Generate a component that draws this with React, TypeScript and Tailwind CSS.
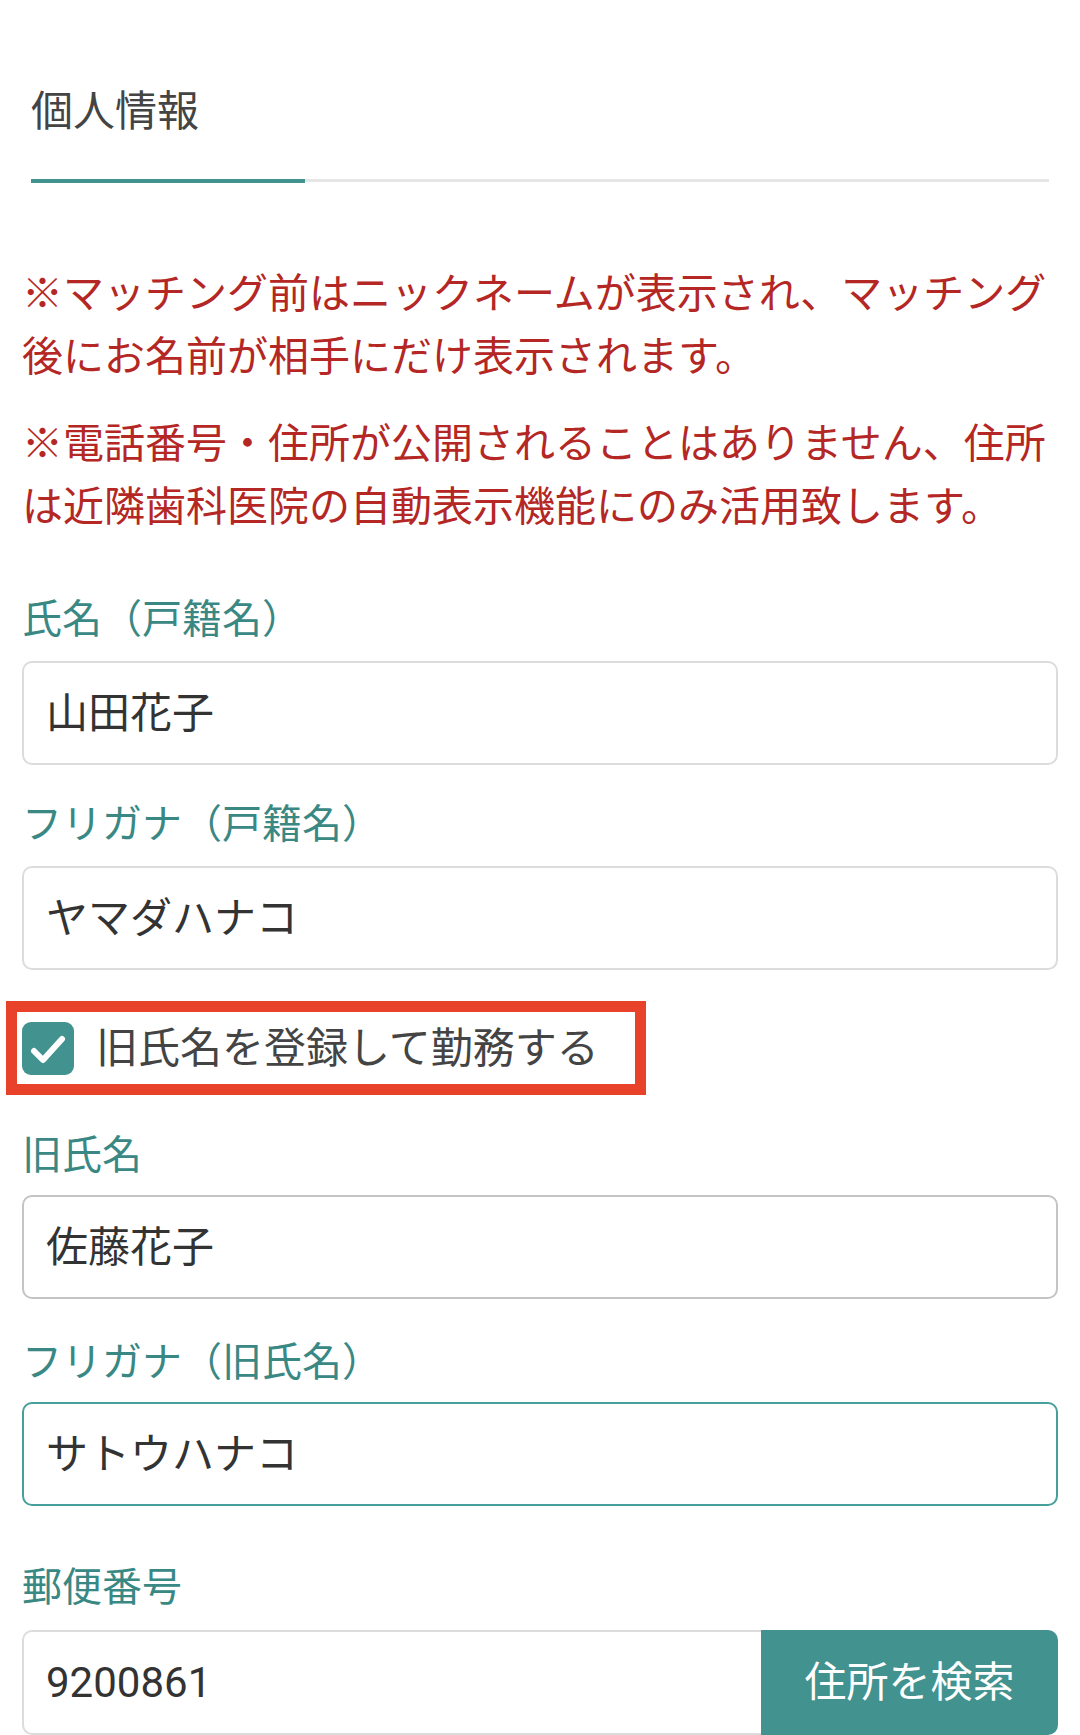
const font = { fontFamily: 'Roboto, "Noto Sans CJK JP", sans-serif' };

function Label({ children, className = "" }: { children: React.ReactNode; className?: string }) {
  return (
    <div className={`text-[40px] leading-[50px] text-[#3a8884] ${className}`}>{children}</div>
  );
}

function Field({ value, focused = false, dark = false }: { value: string; focused?: boolean; dark?: boolean }) {
  const border = focused ? "border-[#45a09b]" : dark ? "border-[#c4c4c4]" : "border-[#dcdcdc]";
  return (
    <div className={`h-[104px] rounded-[10px] border-2 ${border} flex items-center px-[22px] text-[42px] text-[#333]`}>
      {value}
    </div>
  );
}

export default function App() {
  return (
    <div className="w-[1080px] min-h-[1735px] bg-white overflow-hidden" style={font}>
      {/* tab header */}
      <div className="mx-[31px] pt-[87px]">
        <h1 className="text-[42px] leading-[50px] text-[#444] font-normal">個人情報</h1>
        <div className="mt-[42px] relative h-[3px] bg-[#e6e6e6]">
          <div className="absolute left-0 top-0 h-[4px] w-[274px] bg-[#42938f]" />
        </div>
      </div>

      <div className="px-[22px]">
        {/* notes */}
        <p className="mt-[81px] text-[41px] leading-[63px] text-[#b42724]">
          ※マッチング前はニックネームが表示され、マッチング後にお名前が相手にだけ表示されます。
        </p>
        <p className="mt-[24px] text-[41px] leading-[63px] text-[#b42724]">
          ※電話番号・住所が公開されることはありません、住所は近隣歯科医院の自動表示機能にのみ活用致します。
        </p>

        <Label className="mt-[56px]">氏名（戸籍名）</Label>
        <div className="mt-[16px]">
          <Field value="山田花子" />
        </div>

        <Label className="mt-[35px]">フリガナ（戸籍名）</Label>
        <div className="mt-[16px]">
          <Field value="ヤマダハナコ" />
        </div>

        {/* checkbox row with red annotation frame */}
        <div className="mt-[31px] -ml-[16px] w-[640px] border-[11px] border-[#e8422a] flex items-center gap-[22px] pl-[5px] pt-[10px] pb-[9px]">
          <div className="w-[52px] h-[53px] rounded-[9px] bg-[#42928f] flex items-center justify-center">
            <svg width="38" height="38" viewBox="0 0 38 38" fill="none">
              <path d="M5 21 L14 30 L33 9" stroke="white" strokeWidth="6" strokeLinecap="round" strokeLinejoin="round" />
            </svg>
          </div>
          <span className="text-[42px] leading-[53px] text-[#444]">旧氏名を登録して勤務する</span>
        </div>

        <Label className="mt-[36px]">旧氏名</Label>
        <div className="mt-[14px]">
          <Field value="佐藤花子" dark />
        </div>

        <Label className="mt-[39px]">フリガナ（旧氏名）</Label>
        <div className="mt-[14px]">
          <Field value="サトウハナコ" focused />
        </div>

        <Label className="mt-[57px]">郵便番号</Label>
        <div className="mt-[17px] flex h-[105px]">
          <div className="flex-1 rounded-l-[10px] border-2 border-r-0 border-[#dcdcdc] flex items-center px-[22px] text-[42px] text-[#333]">
            9200861
          </div>
          <button className="w-[297px] rounded-r-[10px] bg-[#42928f] text-white text-[42px]">住所を検索</button>
        </div>
      </div>
    </div>
  );
}
